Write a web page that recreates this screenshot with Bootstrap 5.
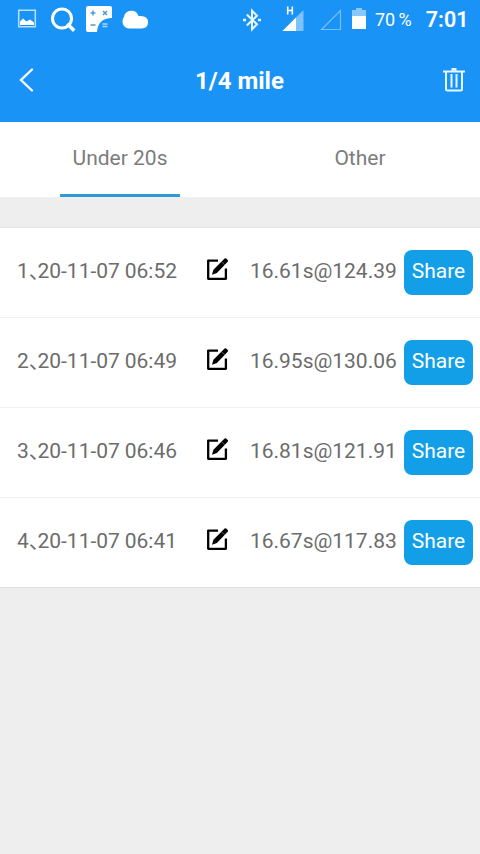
<!DOCTYPE html>
<html lang="en">
<head>
<meta charset="utf-8">
<meta name="viewport" content="width=device-width, initial-scale=1">
<title>1/4 mile</title>
<link href="https://cdn.jsdelivr.net/npm/bootstrap@5.3.0/dist/css/bootstrap.min.css" rel="stylesheet">
<style>
body { background: #eee; font-family: Roboto, "Noto Sans CJK SC", sans-serif; font-size: 21px; line-height: 28px; color: #6c6c6c; min-height: 854px; overflow: hidden; }
svg { display: block; flex: none; }
.app-top { background: #1a93f7; color: #fff; height: 122px; }
.status-bar { height: 40px; padding: 0 12px 0 17px; }
.search-icon { margin-left: 13px; }
.calc-icon { margin-left: 10px; }
.cloud-icon { margin-left: 9px; }
.battery-text { font-size: 18px; margin: 0 14px 0 8px; word-spacing: -1px; }
.clock { font-size: 21.5px; font-weight: 600; margin-right: -.5px; }
.title-bar { height: 82px; padding: 0 14px 0 19px; }
.title-bar h1 { font-size: 24px; line-height: 28px; font-weight: 700; margin-right: 6px; }
.tabs { height: 75px; }
.tabs .nav-link { color: #7c7c7c; padding: 22px 0 0; height: 75px; border-radius: 0; }
.tabs .nav-link.active::after { content: ""; display: block; width: 120px; height: 3px; margin: 22px auto 0; background: #2a9bd8; }
.runs { margin-top: 30px; border-top: 1px solid #e6e6e6; border-bottom: 1px solid #e2e2e2; }
.run { height: 90px; padding: 0 7px 0 17px; border: 0; border-bottom: 1px solid #f0f0f0; background: #fff; color: inherit; }
.run:last-child { height: 89px; border-bottom: 0; }
.when { width: 189px; letter-spacing: -.04px; }
.sep { letter-spacing: -12.2px; }
.result { width: 154px; margin-left: 21px; margin-right: -1px; letter-spacing: -.02px; }
.btn-share { width: 69px; height: 45px; padding: 0 0 3px; border: 0; border-radius: 8px; background: #129fe8; color: #fff; font-size: 21px; line-height: 40px; letter-spacing: -.05px; }
.lift { margin-top: -3px; }
.edit-icon { margin: -8px 0 0 -1px; }
</style>
</head>
<body>
<svg class="d-none">
<symbol id="edit" viewBox="0 0 24 24"><path d="M13 3.600H3.200V21.800H20.900V11.500" fill="none" stroke="#000" stroke-width="2.300" stroke-linejoin="round"/><path d="M7 17.800L8.400 12.800 19.600 1.600q.8-.7 1.600 0l1.500 1.500q.8.800 0 1.600L11.900 15.900z" fill="#000"/><path d="M16.300 4.500l3.300 3.300" stroke="#bbb" stroke-width=".5"/></symbol>
</svg>
<header class="app-top">
<div class="status-bar d-flex align-items-center">
<div class="d-flex align-items-center">
<svg width="20" height="22" viewBox="0 0 20 22"><path d="M1.700 1.200h16.600v16.600H1.700z" fill="none" stroke="#b9dfff" stroke-width="1.500"/><path d="M3 16v-3.500l3-3 3.500 3 3.500-2 4 3V16z" fill="#fff"/></svg>
<svg class="search-icon" width="26" height="26" viewBox="0 0 26 26"><circle cx="12" cy="11.500" r="9.500" fill="none" stroke="#fff" stroke-width="3"/><path d="M18.500 18l4.500 4.500" stroke="#fff" stroke-width="3.500" stroke-linecap="square"/></svg>
<svg class="calc-icon" width="27" height="28" viewBox="0 0 27 28"><path d="M2 0h22q2 0 2 2v10Q12 12 11 26H2q-2 0-2-2V2q0-2 2-2z" fill="#fff"/><path d="M4.500 7h5M7 4.500v5M17 5l4 4m0-4l-4 4M4.500 19h5" stroke="#4b9bd3" stroke-width="1.500"/><path d="M16.500 18h5M16.500 20.500h5" stroke="#a7dcff" stroke-width="1.500"/></svg>
<svg class="cloud-icon" width="28" height="20" viewBox="0 0 28 20"><path d="M7 18.500A6.500 6.500 0 0 1 .5 12Q0 9 2 7A7.500 7.500 0 0 1 16.500 6Q26 5 26 12.300 26 18.500 19.500 18.500z" fill="#fff"/></svg>
</div>
<div class="d-flex align-items-center ms-auto">
<svg width="20" height="24" viewBox="0 0 20 24"><path d="M4.800 6.500L15 16.300l-5 5V2.700l5 5L4.800 17.500" fill="none" stroke="#e9f7ff" stroke-width="2"/><path d="M1 12h3M16 12h3" stroke="#e9f7ff" stroke-width="2.500"/></svg>
<svg class="ms-3" width="26" height="30" viewBox="0 0 26 30"><path d="M9.700 1.500v8M14.300 1.500v8M9.700 5.500h5" stroke="#fff" stroke-width="1.600" fill="none"/><path d="M25.500 5v21h-21z" fill="#7dc2fc"/><path d="M18 12.500V26H4.500z" fill="#fff"/></svg>
<svg class="ms-3" width="22" height="22" viewBox="0 0 22 22"><path d="M20.500 1.500v19h-19z" fill="none" stroke="#76bffa" stroke-width="1.200"/></svg>
<svg class="ms-2" width="17" height="26" viewBox="0 0 17 26"><path d="M2 3h4V1h6v2h4v6H2z" fill="#8ac8fc"/><path d="M2 9h14v13H2z" fill="#fff"/></svg>
<span class="battery-text">70 %</span>
<span class="clock">7:01</span>
</div>
</div>
<div class="title-bar d-flex align-items-center justify-content-between">
<svg class="lift" width="24" height="26" viewBox="0 0 24 26"><path d="M13 2.500L2 13l11 10.500" fill="none" stroke="#fff" stroke-width="2.400" stroke-linecap="round"/></svg>
<h1 class="mb-0">1/4 mile</h1>
<svg class="lift" width="24" height="26" viewBox="0 0 24 26"><path d="M1 4.500h22M10.500 3.500V2h3v1.500M4 5v17q0 1.500 1.500 1.500h13q1.500 0 1.500-1.500V5M9.500 7v13.500M14.500 7v13.500" fill="none" stroke="#e6f8ff" stroke-width="2"/></svg>
</div>
</header>
<nav class="tabs nav nav-justified bg-white">
<a class="nav-link active w-50" href="#">Under 20s</a>
<a class="nav-link w-50" href="#">Other</a>
</nav>
<main class="runs list-group list-group-flush rounded-0">
<div class="run list-group-item d-flex align-items-center"><span class="when lift">1<span class="sep">、</span>20-11-07 06:52</span><svg class="edit-icon" width="24" height="24"><use href="#edit"/></svg><span class="result lift">16.61s@124.39</span><button class="btn btn-share ms-auto">Share</button></div>
<div class="run list-group-item d-flex align-items-center"><span class="when lift">2<span class="sep">、</span>20-11-07 06:49</span><svg class="edit-icon" width="24" height="24"><use href="#edit"/></svg><span class="result lift">16.95s@130.06</span><button class="btn btn-share ms-auto">Share</button></div>
<div class="run list-group-item d-flex align-items-center"><span class="when lift">3<span class="sep">、</span>20-11-07 06:46</span><svg class="edit-icon" width="24" height="24"><use href="#edit"/></svg><span class="result lift">16.81s@121.91</span><button class="btn btn-share ms-auto">Share</button></div>
<div class="run list-group-item d-flex align-items-center"><span class="when lift">4<span class="sep">、</span>20-11-07 06:41</span><svg class="edit-icon" width="24" height="24"><use href="#edit"/></svg><span class="result lift">16.67s@117.83</span><button class="btn btn-share ms-auto">Share</button></div>
</main>
<script src="https://cdn.jsdelivr.net/npm/bootstrap@5.3.0/dist/js/bootstrap.bundle.min.js"></script>
</body>
</html>
